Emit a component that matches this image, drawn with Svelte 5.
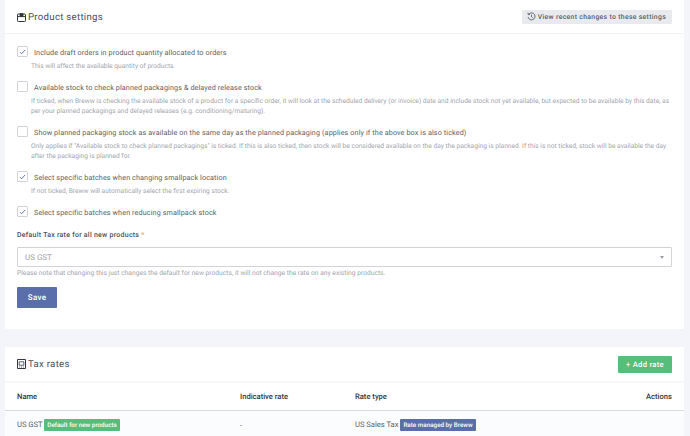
<script>
  const options = [
    {
      label: "Include draft orders in product quantity allocated to orders",
      checked: true,
      help: ["This will affect the available quantity of products."],
    },
    {
      label: "Available stock to check planned packagings & delayed release stock",
      checked: false,
      help: [
        "If ticked, when Breww is checking the available stock of a product for a specific order, it will look at the scheduled delivery (or invoice) date and include stock not yet available, but expected to be available by this date, as",
        "per your planned packagings and delayed releases (e.g. conditioning/maturing).",
      ],
    },
    {
      label: "Show planned packaging stock as available on the same day as the planned packaging (applies only if the above box is also ticked)",
      checked: false,
      help: [
        "Only applies if \"Available stock to check planned packagings\" is ticked. If this is also ticked, then stock will be considered available on the day the packaging is planned. If this is not ticked, stock will be available the day",
        "after the packaging is planned for.",
      ],
    },
    {
      label: "Select specific batches when changing smallpack location",
      checked: true,
      help: ["If not ticked, Breww will automatically select the first expiring stock."],
    },
    {
      label: "Select specific batches when reducing smallpack stock",
      checked: true,
      help: [],
    },
  ];
</script>

<main class="page">
  <section class="card settings">
    <header class="card-head">
      <h2>
        <svg width="9" height="9" viewBox="0 0 9 9" fill="none" stroke="#33363d" stroke-width="1">
          <rect x="0.5" y="1" width="8" height="7.5" rx="0.8" />
          <path d="M0.5 3.6h8" />
          <path d="M3 0.6h3v2.6H3z" fill="#33363d" stroke-width="0.8" />
        </svg>
        Product settings
      </h2>
      <button class="btn-history">
        <svg width="9" height="9" viewBox="0 0 10 10" fill="none" stroke="#555b66" stroke-width="1">
          <path d="M2.2 2.2A3.9 3.9 0 1 1 1.2 5.6" />
          <path d="M1.2 0.8v2h2" />
          <path d="M5 3v2.2l1.4 1" />
        </svg>
        View recent changes to these settings
      </button>
    </header>

    <div class="card-body">
      {#each options as opt}
        <div class="option">
          <div class="check-row">
            <span class="box">
              {#if opt.checked}
                <svg width="7" height="6" viewBox="0 0 7 6" fill="none" stroke="#5468a8" stroke-width="0.9">
                  <path d="M1 3.2l1.6 1.6L6 1" />
                </svg>
              {/if}
            </span>
            <span class="label">{opt.label}</span>
          </div>
          {#each opt.help as line}
            <p class="help">{line}</p>
          {/each}
        </div>
      {/each}

      <label class="field-label" for="tax">Default Tax rate for all new products <span class="req">*</span></label>
      <div class="select" id="tax">
        <span>US GST</span>
        <i class="caret"></i>
      </div>
      <p class="note">Please note that changing this just changes the default for new products, it will not change the rate on any existing products.</p>
      <button class="btn-save">Save</button>
    </div>
  </section>

  <section class="card rates">
    <header class="card-head rates-head">
      <h2>
        <svg width="9" height="10" viewBox="0 0 9 10" fill="none" stroke="#33363d" stroke-width="1">
          <path d="M0.5 0.5h8v9h-8z" />
          <path d="M2.2 2.8h4.6v3.4H2.2z" stroke-width="0.8" />
          <path d="M2.2 8h4.6" stroke-dasharray="1 0.8" stroke-width="0.8" />
        </svg>
        Tax rates
      </h2>
      <button class="btn-add">+ Add rate</button>
    </header>
    <table>
      <thead>
        <tr>
          <th class="c-name">Name</th>
          <th class="c-rate">Indicative rate</th>
          <th class="c-type">Rate type</th>
          <th class="c-actions">Actions</th>
        </tr>
      </thead>
      <tbody>
        <tr>
          <td>US GST <span class="badge green">Default for new products</span></td>
          <td>-</td>
          <td>US Sales Tax <span class="badge blue">Rate managed by Breww</span></td>
          <td></td>
        </tr>
      </tbody>
    </table>
  </section>
</main>

<style>
  :global(body) {
    margin: 0;
    background: #f3f5fa;
    overflow: hidden;
  }

  .page {
    height: 436px;
    overflow: hidden;
    padding: 0 6px 0 5px;
    font-family: Roboto, "Liberation Sans", sans-serif;
    color: #4b4f58;
    text-rendering: geometricPrecision;
  }

  .card {
    background: #fff;
  }

  .settings {
    height: 329px;
    margin-bottom: 18px;
  }

  .card-head {
    display: flex;
    justify-content: space-between;
    align-items: center;
    height: 33px;
    padding: 0 12px;
    border-bottom: 1px solid #f2f3f6;
  }

  h2 {
    display: flex;
    align-items: center;
    gap: 2px;
    margin: 0;
    font-size: 9.6px;
    font-weight: 400;
    letter-spacing: 0.3px;
    color: #4a4e57;
  }

  .settings h2 {
    padding-top: 1px;
  }

  button {
    font-family: inherit;
    border: 0;
    padding: 0;
    text-rendering: geometricPrecision;
  }

  .btn-history {
    display: flex;
    align-items: center;
    gap: 2px;
    height: 14px;
    padding: 0 6px 0 5px;
    background: #e9eaee;
    border-radius: 1px;
    color: #555b66;
    font-size: 6.8px;
    font-weight: 500;
    letter-spacing: 0.34px;
  }

  .card-body {
    padding: 12px 12px 0;
  }

  .option {
    margin-bottom: 10px;
  }

  .check-row {
    display: flex;
    align-items: center;
    gap: 6px;
    height: 11px;
  }

  .box {
    box-sizing: border-box;
    display: flex;
    align-items: center;
    justify-content: center;
    width: 11px;
    height: 11px;
    border: 1px solid #d2d4da;
    border-radius: 1px;
    background: #fff;
  }

  .label {
    padding-top: 1px;
    font-size: 7.2px;
    letter-spacing: 0.12px;
    white-space: nowrap;
    color: #5a5e66;
  }

  .help {
    margin: 0 0 0 14px;
    font-size: 6.63px;
    line-height: 10px;
    color: #a2a6ad;
    white-space: nowrap;
  }

  .check-row + .help {
    margin-top: 4px;
  }

  .field-label {
    display: block;
    margin-top: 14px;
    font-size: 7px;
    font-weight: 500;
    letter-spacing: 0.25px;
    color: #4b4f58;
  }

  .req {
    color: #f0a35e;
  }

  .select {
    display: flex;
    justify-content: space-between;
    align-items: center;
    box-sizing: border-box;
    height: 20px;
    margin-top: 8px;
    padding: 0 7px;
    border: 1px solid #d2d3d6;
    border-radius: 1px;
    font-size: 8px;
    color: #a2a5ad;
  }

  .caret {
    width: 0;
    height: 0;
    border-left: 2.5px solid transparent;
    border-right: 2.5px solid transparent;
    border-top: 3px solid #9a9ea6;
  }

  .note {
    margin: 1px 0 0;
    font-size: 6.7px;
    line-height: 10px;
    color: #a2a5ad;
    white-space: nowrap;
  }

  .btn-save {
    display: block;
    width: 40px;
    height: 21px;
    margin-top: 9px;
    background: #5a6eab;
    border-radius: 1px;
    color: #fff;
    font-size: 8px;
    font-weight: 500;
    letter-spacing: 0.3px;
  }

  .rates-head {
    height: 34px;
    border-bottom: 2px solid #f7f8fa;
  }

  .btn-add {
    height: 17px;
    width: 54px;
    background: #56bd7b;
    border-radius: 1px;
    color: #fff;
    font-size: 7.6px;
    font-weight: 500;
    letter-spacing: 0.3px;
  }

  table {
    width: 100%;
    border-collapse: collapse;
    table-layout: fixed;
    font-size: 7.6px;
  }

  th {
    height: 27px;
    padding: 0;
    font-weight: 500;
    text-align: left;
    color: #33363d;
    border-bottom: 1px solid #d9dbe0;
  }

  td {
    height: 28px;
    padding: 0;
    background: #fbfcfe;
    color: #5a5e66;
    white-space: nowrap;
  }

  .c-name {
    width: 223px;
    padding-left: 12px;
  }

  td:first-child {
    padding-left: 12px;
  }

  .c-rate {
    width: 115px;
  }

  .c-type {
    width: 160px;
  }

  .c-actions {
    padding-right: 12px;
    text-align: right;
  }

  .badge {
    display: inline-block;
    padding: 0 3px;
    height: 12px;
    line-height: 12px;
    border-radius: 1px;
    color: #fff;
    font-size: 6.3px;
    font-weight: 500;
  }

  .green {
    background: #56bd7b;
  }

  .blue {
    background: #5a6eab;
  }
</style>
